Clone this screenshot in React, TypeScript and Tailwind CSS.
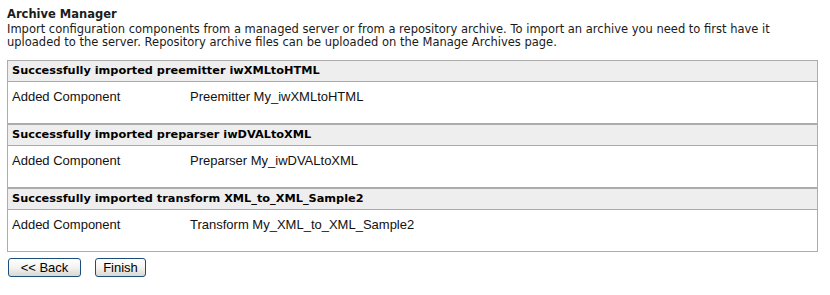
import React from "react";

type Imported = {
    title: string;
    label: string;
    value: string;
};

const imports: Imported[] = [
    {
        title: "Successfully imported preemitter iwXMLtoHTML",
        label: "Added Component",
        value: "Preemitter My_iwXMLtoHTML",
    },
    {
        title: "Successfully imported preparser iwDVALtoXML",
        label: "Added Component",
        value: "Preparser My_iwDVALtoXML",
    },
    {
        title: "Successfully imported transform XML_to_XML_Sample2",
        label: "Added Component",
        value: "Transform My_XML_to_XML_Sample2",
    },
];

function ResultBox({ title, label, value }: Imported) {
    return (
        <div className="border border-[#acacac] bg-white">
            <div className="h-[21px] pl-[4px] flex items-center bg-[#efeeee] border-b border-[#a9a9a9] text-[11.3px] font-bold text-black">
                {title}
            </div>
            <div className="h-[41px] pl-[4px] pt-[7px] grid grid-cols-[178px_1fr] font-['Liberation_Sans',Arial,sans-serif] text-[13px] leading-[15px] text-[#111]">
                <span>{label}</span>
                <span>{value}</span>
            </div>
        </div>
    );
}

function XpButton({ children, width }: { children: React.ReactNode; width: string }) {
    return (
        <button
            className={`${width} h-[19px] flex items-center justify-center rounded-[3px] border border-[#1c4e7d] bg-gradient-to-b from-[#ffffff] via-[#f3f3f1] to-[#d9d8d2] font-['Liberation_Sans',Arial,sans-serif] text-[13px] leading-none text-black`}
        >
            {children}
        </button>
    );
}

export default function App() {
    return (
        <div className="w-[830px] h-[295px] bg-white px-[7px] pt-[6px] font-['DejaVu_Sans',Verdana,sans-serif] text-[#1a1a1a]">
            <h1 className="text-[11.5px] font-bold leading-[17px] text-[#1c1c1c]">Archive Manager</h1>
            <p className="text-[11.5px] leading-[13px] w-[811px]">
                Import configuration components from a managed server or from a repository archive. To import an archive you need to first have it
                <br />
                uploaded to the server. Repository archive files can be uploaded on the Manage Archives page.
            </p>

            <div className="mt-[11px] w-[811px]">
                {imports.map((item) => (
                    <ResultBox key={item.title} {...item} />
                ))}
            </div>

            <div className="mt-[6px] pl-[1px] flex gap-[14px]">
                <XpButton width="w-[73px]">&lt;&lt; Back</XpButton>
                <XpButton width="w-[51px]">Finish</XpButton>
            </div>
        </div>
    );
}
